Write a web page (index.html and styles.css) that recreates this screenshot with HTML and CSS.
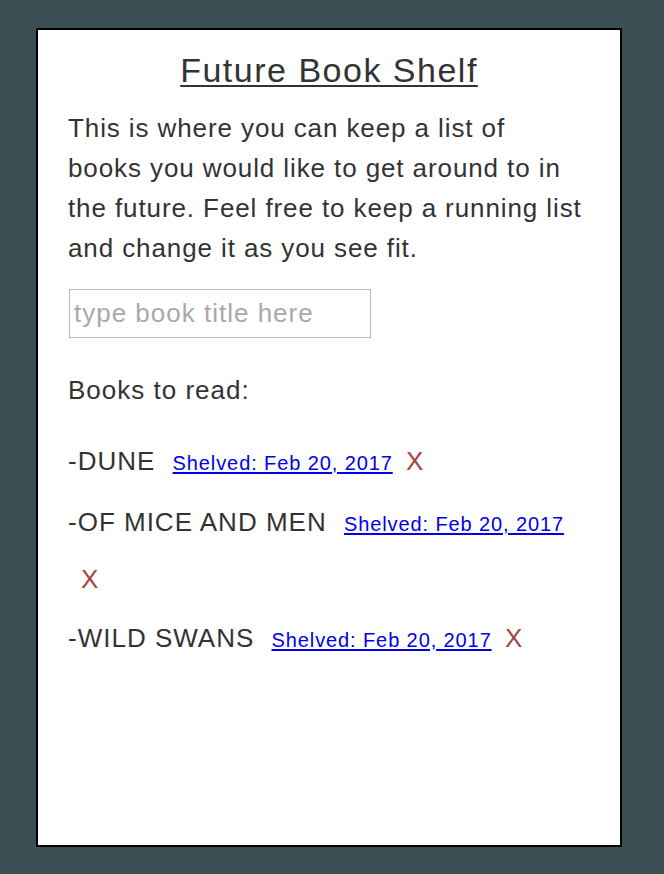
FILE: index.html
```html
<!DOCTYPE html>
<html>
<head>
<meta charset="utf-8">
<link rel="stylesheet" href="styles.css">
</head>
<body>
<div class="card">
  <h1 class="title">Future Book Shelf</h1>
  <p class="intro">This is where you can keep a list of<br>books you would like to get around to in<br>the future. Feel free to keep a running list<br>and change it as you see fit.</p>
  <input class="book-input" type="text" placeholder="type book title here">
  <p class="label">Books to read:</p>
  <ul class="books">
    <li class="book"><span class="name">-DUNE</span> <a class="shelved" href="#">Shelved: Feb 20, 2017</a> <span class="remove">X</span></li>
    <li class="book"><span class="name">-OF MICE AND MEN</span> <a class="shelved" href="#">Shelved: Feb 20, 2017</a> <span class="remove">X</span></li>
    <li class="book"><span class="name">-WILD SWANS</span> <a class="shelved" href="#">Shelved: Feb 20, 2017</a> <span class="remove">X</span></li>
  </ul>
</div>
</body>
</html>
```

FILE: styles.css
```css
html, body {
  margin: 0;
  padding: 0;
}
body {
  background: #3b4f54;
  font-family: "Liberation Sans", Arial, sans-serif;
  color: #333;
  padding: 28px 42px 27px 36px;
  height: 874px;
  box-sizing: border-box;
}
.card {
  background: #fff;
  border: 2px solid #000;
  height: 100%;
  box-sizing: border-box;
  padding: 20px 20px 20px 30px;
}
.title {
  margin: 0;
  text-align: center;
  font-size: 34px;
  letter-spacing: 1.5px;
  font-weight: normal;
  text-decoration: underline;
  text-decoration-thickness: 2px;
  text-underline-offset: 3px;
  line-height: 40px;
  padding-right: 10px;
}
.intro {
  margin: 18px 0 0;
  font-size: 26px;
  letter-spacing: 0.9px;
  line-height: 40px;
}
.book-input {
  display: block;
  margin: 21px 0 0 1px;
  width: 302px;
  height: 49px;
  box-sizing: border-box;
  border: 1px solid #bbb;
  padding: 0 4px;
  font-family: "Liberation Sans", Arial, sans-serif;
  font-size: 26px;
  letter-spacing: 1px;
  color: #333;
}
.book-input::placeholder {
  color: #a9a9a9;
}
.label {
  margin: 32px 0 0;
  font-size: 26px;
  letter-spacing: 1px;
  line-height: 40px;
}
.books {
  list-style: none;
  margin: 24px 20px 0 0;
  padding: 0;
}
.book {
  font-size: 26px;
  letter-spacing: 1px;
  line-height: 55px;
  margin-bottom: 4px;
  word-spacing: -8px;
}
.name {
  word-spacing: 0;
  margin-right: 17px;
}
.shelved {
  color: #0000ee;
  font-size: 20px;
  letter-spacing: 0.9px;
  word-spacing: 0;
  text-underline-offset: 2px;
}
.remove {
  color: #a94442;
  font-size: 26px;
  letter-spacing: 0;
  margin-left: 13px;
}
```
